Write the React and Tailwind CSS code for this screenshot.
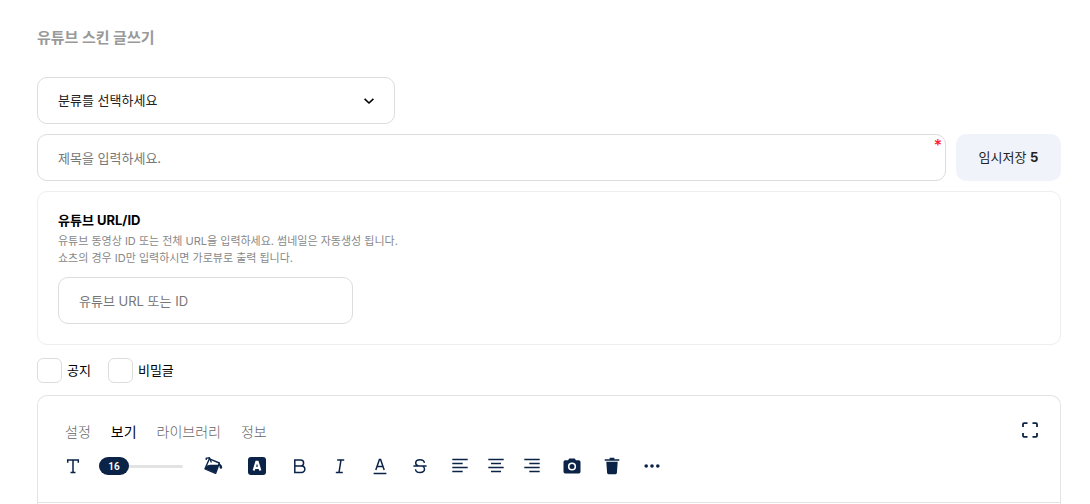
import { useState } from "react";

const FIELD =
  "h-[47px] rounded-[10px] border border-[#dddddd] bg-white px-5 text-[13px] outline-none placeholder:text-[#777777] focus:border-[#0a2347]";

const TABS = ["설정", "보기", "라이브러리", "정보"];

function Icon({ children, className = "size-5" }) {
  return (
    <svg
      viewBox="0 0 20 20"
      className={className}
      fill="none"
      stroke="currentColor"
      strokeWidth="1.5"
      aria-hidden="true"
    >
      {children}
    </svg>
  );
}

function Tool({ label, wide = "w-10", children }) {
  return (
    <button
      type="button"
      aria-label={label}
      className={`flex h-8 items-center justify-center ${wide}`}
    >
      <Icon>{children}</Icon>
    </button>
  );
}

function SizeSlider() {
  const [size, setSize] = useState(16);
  const min = 16;
  const max = 60;
  return (
    <div className="relative ml-[6px] flex h-8 w-[84px] items-center">
      <input
        type="range"
        aria-label="글자 크기"
        min={min}
        max={max}
        value={size}
        onChange={(e) => setSize(Number(e.target.value))}
        className="h-[18px] w-full cursor-pointer appearance-none bg-transparent [&::-webkit-slider-runnable-track]:h-[3px] [&::-webkit-slider-runnable-track]:rounded-full [&::-webkit-slider-runnable-track]:bg-[#e3e3e3] [&::-webkit-slider-thumb]:mt-[-8px] [&::-webkit-slider-thumb]:h-[18px] [&::-webkit-slider-thumb]:w-[30px] [&::-webkit-slider-thumb]:appearance-none [&::-webkit-slider-thumb]:rounded-full [&::-webkit-slider-thumb]:bg-[#0a2347]"
      />
      <span
        className="pointer-events-none absolute w-[30px] text-center font-['Roboto',sans-serif] text-[10px] font-semibold text-white"
        style={{ left: `${((size - min) / (max - min)) * 54}px` }}
      >
        {size}
      </span>
    </div>
  );
}

function Check({ id, label }) {
  return (
    <div className="flex items-center gap-[5px]">
      <input
        id={id}
        type="checkbox"
        className="size-[25px] appearance-none rounded-[6px] border border-[#dddddd] bg-white checked:border-[#0a2347] checked:bg-[#0a2347]"
      />
      <label htmlFor={id} className="text-[13px] text-black">
        {label}
      </label>
    </div>
  );
}

function Toolbar() {
  return (
    <div className="flex items-center text-[#0a2347]">
      <Tool label="글꼴">
        <path d="M4.7 6.8V3.9h10.6v2.9M10 3.9v12.7M7.5 16.6h5" />
      </Tool>
      <SizeSlider />
      <div className="ml-2 flex">
        <Tool label="배경색" wide="w-11">
          <path d="M6.4 2.8 16.4 7 12.6 17.4 2 12.8Z" strokeWidth="1.4" strokeLinejoin="round" />
          <path d="M4 9.4 7.2 8.8 15.8 8.8 12.4 17 2.2 12.6Z" fill="currentColor" stroke="none" />
          <path d="M3.2 4V2.2L6.4 1.8 8.4 6.6" strokeWidth="1.3" />
          <path
            d="M15.8 7.2c2.2.8 3.4 2.6 3.4 4.2a1.3 1.3 0 0 1-2.6 0c0-1-.2-1.800-1.400-2.400Z"
            fill="currentColor"
            stroke="none"
          />
        </Tool>
        <Tool label="글자색" wide="w-11">
          <rect x="1" y="1" width="18" height="18" rx="3" fill="currentColor" stroke="none" />
          <path d="m6.7 14.5 2.7-8.6h1.2l2.7 8.6M7.8 11.8h4.4" stroke="white" strokeWidth="2.2" />
        </Tool>
      </div>
      <div className="ml-px flex">
        <Tool label="굵게">
          <path d="M4.8 3.9h5.8a3 3 0 0 1 0 6H4.8zM4.8 9.9h6.8a3.2 3.2 0 0 1 0 6.5H4.8z" />
        </Tool>
        <Tool label="기울임">
          <path d="M7.2 3.9h7M5.8 16.4h7M11 3.9 9 16.4" />
        </Tool>
        <Tool label="밑줄">
          <path d="M5.8 14 9.4 3.5h1.2L14.2 14M7 10.6h6M3.6 17.4h12.8" />
        </Tool>
        <Tool label="취소선">
          <path d="M14.4 6.8c-.3-1.8-1.8-3-4.3-3s-4.4 1.2-4.4 3.2c0 1.4.8 2.3 2.7 3M5.5 13.2c.2 2.1 1.8 3.3 4.5 3.3s4.5-1.2 4.5-3.4c0-1.3-.5-2.1-1.6-2.7M3.4 10h13.2" />
        </Tool>
      </div>
      <div className="ml-[2px] flex">
        <Tool label="왼쪽 정렬" wide="w-9">
          <path d="M2.3 3.5h15.4M2.3 7.5h10.4M2.3 11.5h15.4M2.3 15.5h10.4" />
        </Tool>
        <Tool label="가운데 정렬" wide="w-9">
          <path d="M2.3 3.5h15.4M5 7.5h10M2.3 11.5h15.4M5 15.5h10" />
        </Tool>
        <Tool label="오른쪽 정렬" wide="w-9">
          <path d="M2.3 3.5h15.4M7.3 7.5h10.4M2.3 11.5h15.4M7.3 15.5h10.4" />
        </Tool>
      </div>
      <div className="ml-[2px] flex">
        <Tool label="사진">
          <path
            fillRule="evenodd"
            d="M7.3 2.4h5.4l1.3 1.8h2.8a1.7 1.7 0 0 1 1.7 1.7v9.8a1.7 1.7 0 0 1-1.7 1.7H3.2a1.7 1.7 0 0 1-1.7-1.7V5.9a1.7 1.7 0 0 1 1.7-1.7H6ZM10 6.4a4.1 4.1 0 1 0 0 8.2 4.1 4.1 0 0 0 0-8.2Z"
            fill="currentColor"
            stroke="none"
          />
          <circle cx="10" cy="10.5" r="2.5" fill="currentColor" stroke="none" />
        </Tool>
        <Tool label="삭제">
          <path
            d="M7.6 1.8h4.8v1.4h4.9v1.6H2.7V3.2h4.9ZM4.3 5.8h11.4l-.8 11a1.7 1.7 0 0 1-1.7 1.5H6.8a1.7 1.7 0 0 1-1.7-1.5Z"
            fill="currentColor"
            stroke="none"
          />
        </Tool>
        <Tool label="더보기">
          <g fill="currentColor" stroke="none">
            <circle cx="4.2" cy="10" r="1.8" />
            <circle cx="10" cy="10" r="1.8" />
            <circle cx="15.8" cy="10" r="1.8" />
          </g>
        </Tool>
      </div>
    </div>
  );
}

export default function App() {
  const [tab, setTab] = useState("보기");
  return (
    <main className="flex min-h-screen flex-col bg-white pr-[29px] pl-[37px] font-['Inter','Noto_Sans_CJK_KR',sans-serif] text-black">
      <h1 className="mt-[27px] text-[15px] leading-[22px] font-bold text-[#999999]">유튜브 스킨 글쓰기</h1>

      <form className="mt-7 flex flex-1 flex-col">
        <div className="relative w-[35%]">
          <select aria-label="분류" className={`${FIELD} w-full appearance-none text-[#222222]`}>
            <option>분류를 선택하세요</option>
          </select>
          <svg
            viewBox="0 0 12 12"
            className="pointer-events-none absolute top-[18px] right-5 size-3"
            fill="none"
            stroke="currentColor"
            strokeWidth="1.6"
            aria-hidden="true"
          >
            <path d="m1.6 3.8 4.4 4.2 4.4-4.2" />
          </svg>
        </div>

        <div className="mt-[10px] flex gap-[10px]">
          <div className="relative flex-1">
            <input aria-label="제목" required placeholder="제목을 입력하세요." className={`${FIELD} w-full`} />
            <span className="absolute top-[3px] right-1 text-[16px] leading-4 font-medium text-[#ff2020]">*</span>
          </div>
          <button
            type="button"
            className="h-[47px] w-[105px] rounded-[10px] bg-[#f0f3fa] text-[13px] text-[#222222]"
          >
            임시저장 <b className="font-bold">5</b>
          </button>
        </div>

        <section className="mt-[10px] rounded-[10px] border border-[#eeeeee] px-5 pt-[18px] pb-5">
          <label htmlFor="youtube" className="block text-[13px] leading-5 font-bold">
            유튜브 URL/ID
          </label>
          <p className="mt-[3px] text-[11px] leading-[17px] text-[#888888]">
            유튜브 동영상 ID 또는 전체 URL을 입력하세요. 썸네일은 자동생성 됩니다.
            <br />
            쇼츠의 경우 ID만 입력하시면 가로뷰로 출력 됩니다.
          </p>
          <input id="youtube" placeholder="유튜브 URL 또는 ID" className={`${FIELD} mt-[10px] block w-[30%]`} />
        </section>

        <div className="mt-[13px] flex gap-[17px]">
          <Check id="notice" label="공지" />
          <Check id="secret" label="비밀글" />
        </div>

        <section className="mt-3 flex flex-1 flex-col rounded-t-[10px] border border-b-0 border-[#e3e3e3]">
          <div className="border-b border-[#e3e3e3] pt-[22px] pr-5 pb-5 pl-[15px]">
            <div className="flex items-start justify-between">
              <div className="flex gap-5 pt-[2px] pl-3">
                {TABS.map((name) => (
                  <button
                    key={name}
                    type="button"
                    onClick={() => setTab(name)}
                    className={`text-[14px] leading-6 ${
                      tab === name ? "text-black" : "font-light text-[#666666]"
                    }`}
                  >
                    {name}
                  </button>
                ))}
              </div>
              <button type="button" aria-label="전체 화면" className="mt-[2px] text-[#0a2347]">
                <Icon>
                  <path
                    d="M3 7V4.2Q3 3.2 4 3.2h3.500M12.500 3.200H16q1 0 1 1V7M17 13v2.800q0 1-1 1h-3.500M7.500 16.800H4q-1 0-1-1V13"
                    strokeWidth="1.8"
                  />
                </Icon>
              </button>
            </div>
            <div className="mt-[6px]">
              <Toolbar />
            </div>
          </div>
        </section>
      </form>
    </main>
  );
}
